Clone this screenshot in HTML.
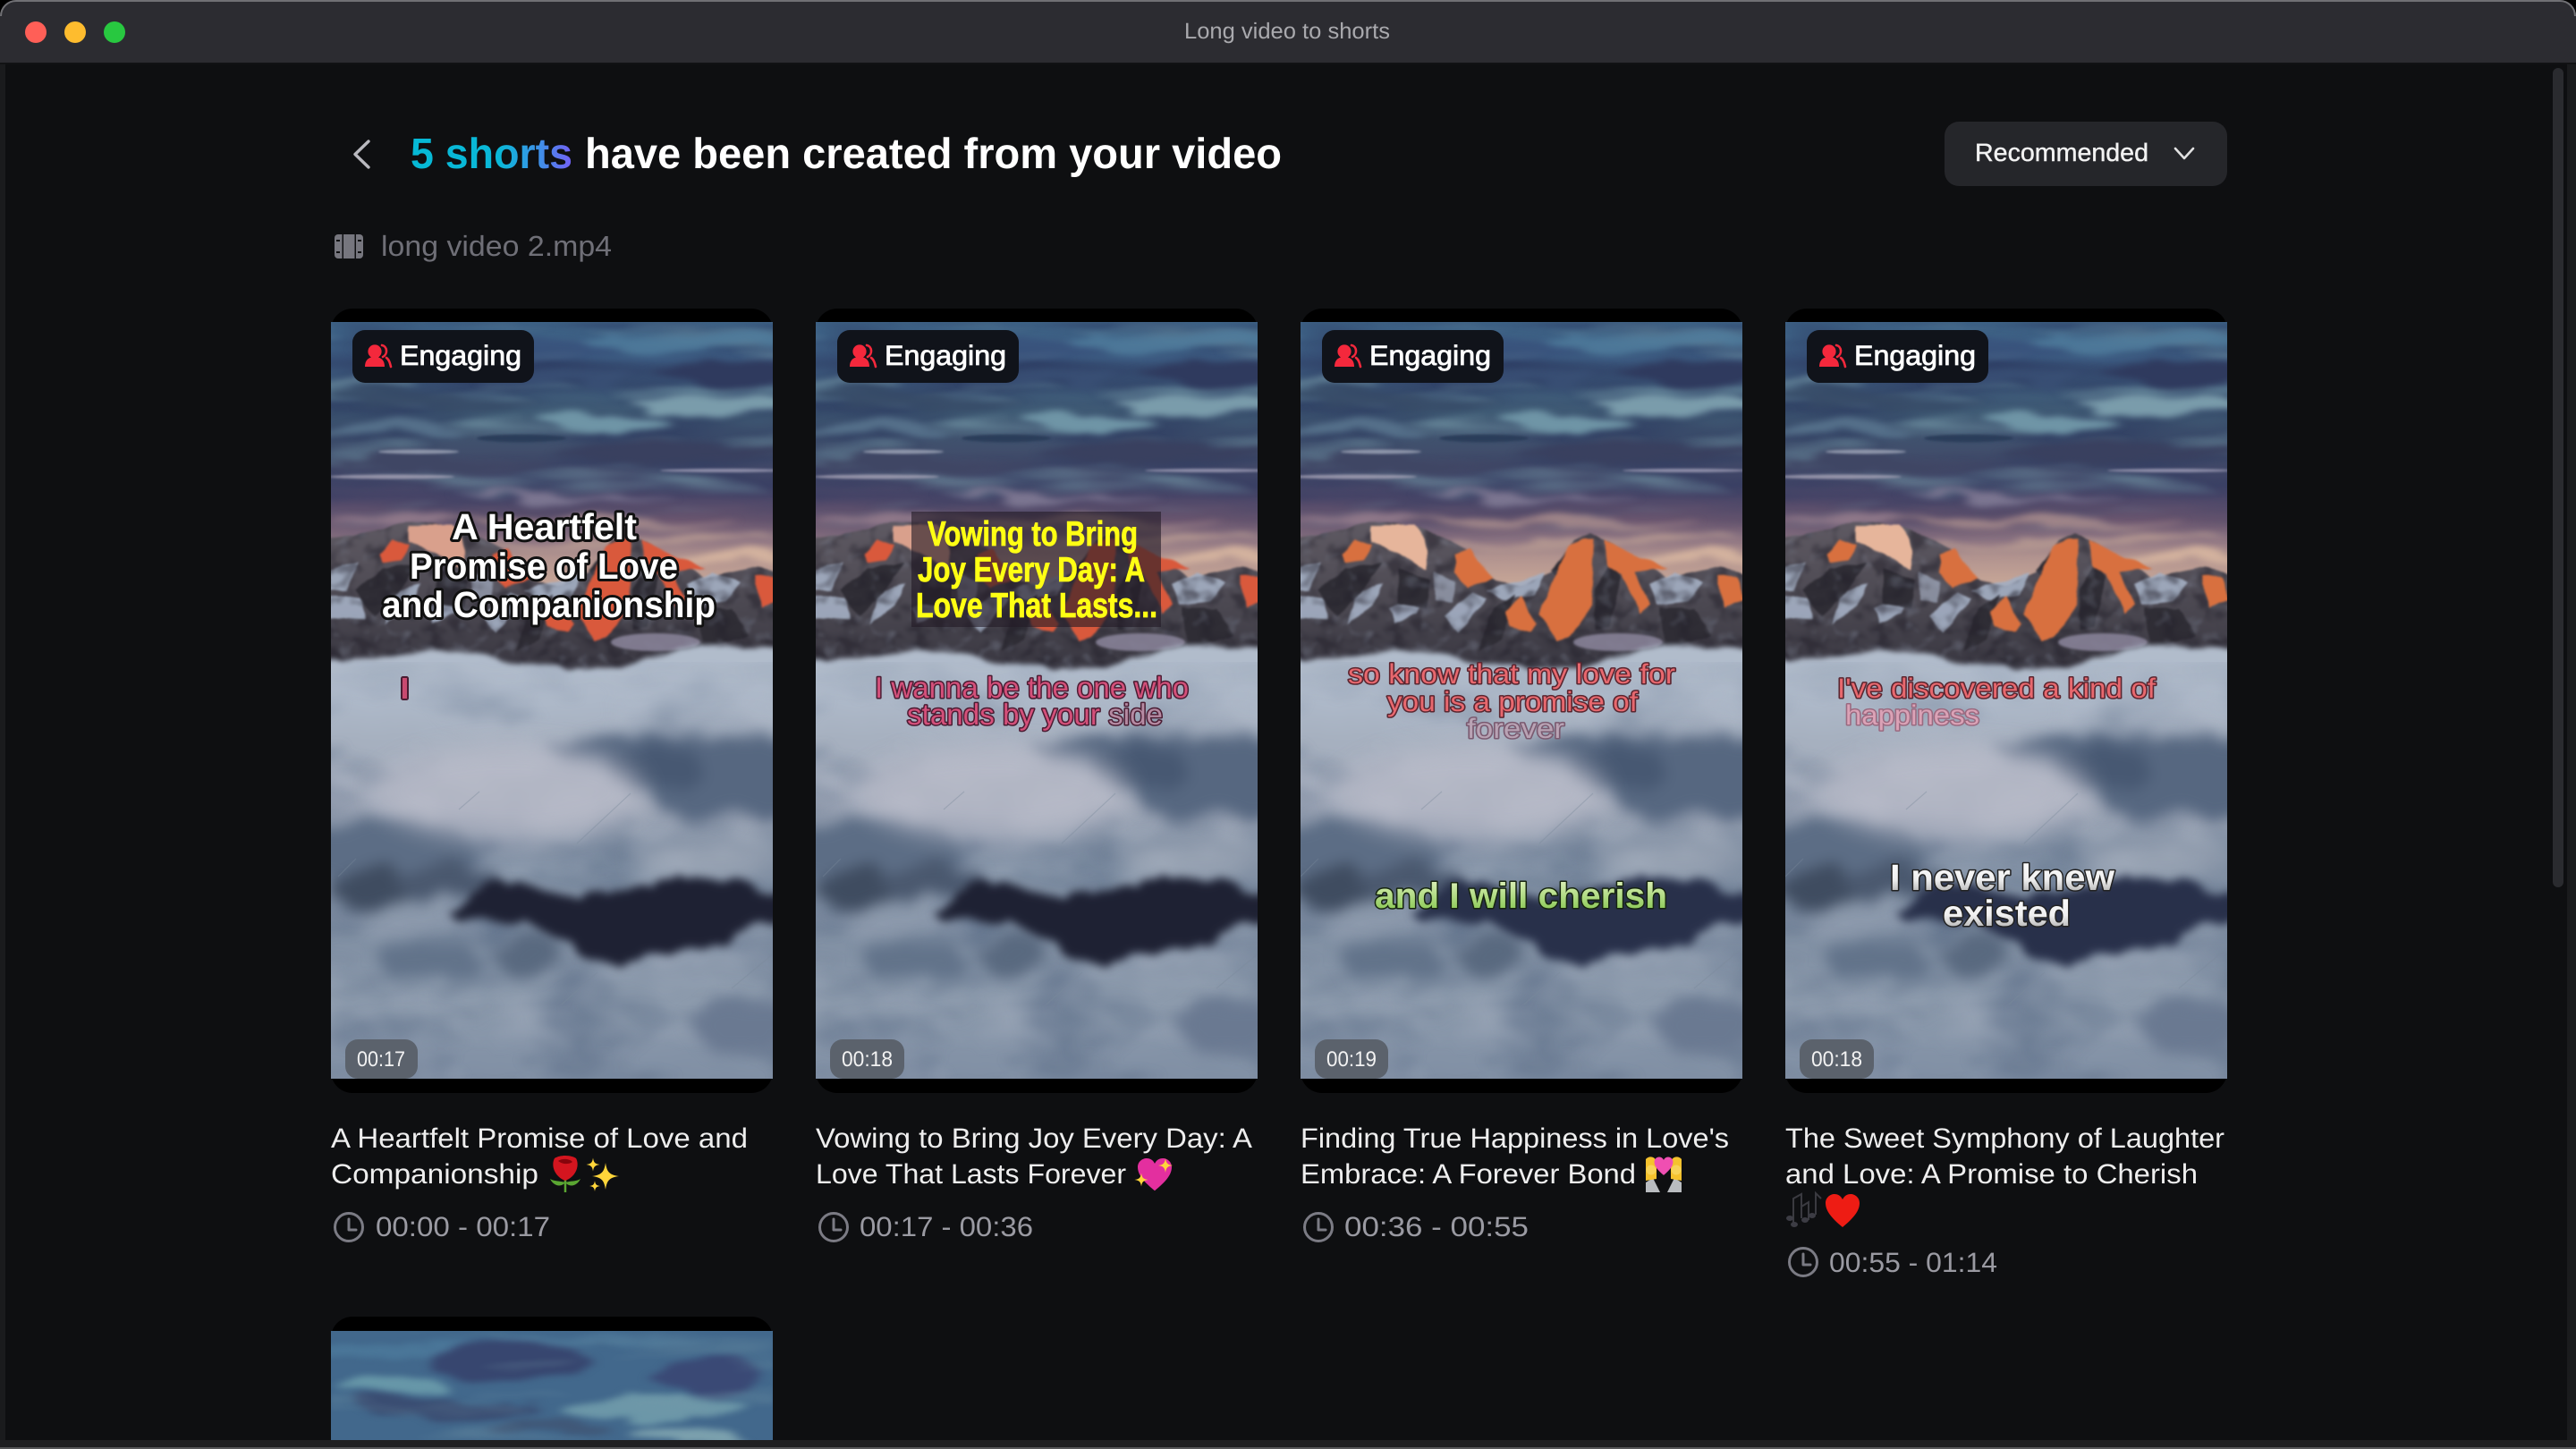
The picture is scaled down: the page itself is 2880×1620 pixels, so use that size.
<!DOCTYPE html>
<html lang="en"><head><meta charset="utf-8"><title>Long video to shorts</title>
<style>
html,body{margin:0;padding:0;background:#000;width:2880px;height:1620px;overflow:hidden}
svg{display:block}
text{font-family:"Liberation Sans","DejaVu Sans",sans-serif;text-rendering:geometricPrecision}
.t{font-size:31px;fill:#eeeeee}
.tm{font-size:31px;fill:#9a9aa2}
.eng{font-size:31px;fill:#fff;stroke:#fff;stroke-width:.8px;font-weight:400}
.dur{font-size:24px;fill:#f2f2f2}
.h1{font-size:41px;font-weight:700;fill:#fff;stroke:#111;stroke-width:6px;paint-order:stroke;stroke-linejoin:round}
.y{font-size:39px;font-weight:700;fill:#ffff14;stroke:#ffff14;stroke-width:.8px}
.p{font-size:33px;font-weight:400;fill:#d4507a;stroke:#4a1c32;stroke-width:3px;paint-order:stroke;stroke-linejoin:round}
.r{font-size:31px;font-weight:400;fill:#e8686e;stroke:#5a2630;stroke-width:3px;paint-order:stroke;stroke-linejoin:round}
.f{fill:#b9a3b4;stroke:#7a5a70}
.g{font-size:40px;font-weight:700;fill:url(#gr);stroke:#16240f;stroke-width:3px;paint-order:stroke;stroke-linejoin:round}
.w{font-size:41px;font-weight:700;fill:url(#wh);stroke:#222;stroke-width:3px;paint-order:stroke;stroke-linejoin:round}
</style></head>
<body>
<svg xmlns="http://www.w3.org/2000/svg" width="2880" height="1620" viewBox="0 0 2880 1620">
<defs>
<linearGradient id="sky" x1="0" y1="0" x2="0" y2="1">
<stop offset="0" stop-color="#3f6689"/><stop offset=".13" stop-color="#3c5a80"/><stop offset=".32" stop-color="#3f5a74"/><stop offset=".48" stop-color="#414b69"/><stop offset=".61" stop-color="#4a4668"/><stop offset=".69" stop-color="#6a566f"/><stop offset=".76" stop-color="#8d7482"/><stop offset=".82" stop-color="#b1938f"/><stop offset=".92" stop-color="#c8a797"/><stop offset="1" stop-color="#b59a96"/>
</linearGradient>
<linearGradient id="cl" gradientUnits="userSpaceOnUse" x1="0" y1="360" x2="0" y2="846">
<stop offset="0" stop-color="#b2bdcc"/><stop offset=".13" stop-color="#adb8c8"/><stop offset=".23" stop-color="#a6b0bf"/><stop offset=".37" stop-color="#a0a8b8"/><stop offset=".5" stop-color="#8796a9"/><stop offset=".66" stop-color="#7f8ea2"/><stop offset=".82" stop-color="#8d9bad"/><stop offset="1" stop-color="#808fa4"/>
</linearGradient>
<linearGradient id="mt" gradientUnits="userSpaceOnUse" x1="0" y1="220" x2="0" y2="390">
<stop offset="0" stop-color="#5f5a63"/><stop offset=".6" stop-color="#4a4750"/><stop offset="1" stop-color="#383640"/>
</linearGradient>
<linearGradient id="gt" gradientUnits="userSpaceOnUse" x1="459" y1="0" x2="640" y2="0">
<stop offset="0" stop-color="#06b9d6"/><stop offset=".55" stop-color="#0ab8d8"/><stop offset=".8" stop-color="#3f8fe8"/><stop offset="1" stop-color="#7460f5"/>
</linearGradient>
<linearGradient id="gr" x1="0" y1="0" x2="0" y2="1"><stop offset="0" stop-color="#e6f5c4"/><stop offset="1" stop-color="#7cc244"/></linearGradient>
<linearGradient id="wh" x1="0" y1="0" x2="0" y2="1"><stop offset="0" stop-color="#fff"/><stop offset=".55" stop-color="#f0f0f0"/><stop offset="1" stop-color="#9c9c9c"/></linearGradient>
<linearGradient id="fadeS" gradientUnits="userSpaceOnUse" x1="0" y1="0" x2="0" y2="250"><stop offset="0" stop-color="#fff"/><stop offset=".7" stop-color="#fff"/><stop offset="1" stop-color="#000"/></linearGradient>
<mask id="mS" maskUnits="userSpaceOnUse" x="-30" y="0" width="554" height="260"><rect x="-30" y="0" width="554" height="260" fill="url(#fadeS)"/></mask>
<linearGradient id="fadeC" gradientUnits="userSpaceOnUse" x1="0" y1="390" x2="0" y2="500"><stop offset="0" stop-color="#444"/><stop offset="1" stop-color="#fff"/></linearGradient>
<mask id="mC" maskUnits="userSpaceOnUse" x="-30" y="380" width="554" height="480"><rect x="-30" y="380" width="554" height="480" fill="url(#fadeC)"/></mask>

<filter id="org" filterUnits="userSpaceOnUse" x="-60" y="-40" width="614" height="926" color-interpolation-filters="sRGB">
<feTurbulence type="fractalNoise" baseFrequency=".01 .03" numOctaves="3" seed="4" result="n"/>
<feDisplacementMap in="SourceGraphic" in2="n" scale="34" xChannelSelector="R" yChannelSelector="G"/>
<feGaussianBlur stdDeviation="6 3.5"/>
</filter>
<filter id="org2" filterUnits="userSpaceOnUse" x="-60" y="300" width="614" height="600" color-interpolation-filters="sRGB">
<feTurbulence type="fractalNoise" baseFrequency=".028" numOctaves="3" seed="9" result="n"/>
<feDisplacementMap in="SourceGraphic" in2="n" scale="30" xChannelSelector="R" yChannelSelector="G"/>
<feGaussianBlur stdDeviation="8"/>
</filter>
<filter id="core" filterUnits="userSpaceOnUse" x="-60" y="540" width="614" height="260" color-interpolation-filters="sRGB">
<feTurbulence type="fractalNoise" baseFrequency=".03" numOctaves="3" seed="5" result="n"/>
<feDisplacementMap in="SourceGraphic" in2="n" scale="22" xChannelSelector="R" yChannelSelector="G"/>
<feGaussianBlur stdDeviation="5"/>
</filter>
<filter id="crag" filterUnits="userSpaceOnUse" x="-60" y="180" width="614" height="260" color-interpolation-filters="sRGB">
<feTurbulence type="fractalNoise" baseFrequency=".04" numOctaves="2" seed="12" result="n"/>
<feDisplacementMap in="SourceGraphic" in2="n" scale="7" xChannelSelector="R" yChannelSelector="G"/>
<feGaussianBlur stdDeviation="1"/>
</filter>
<filter id="cedge" filterUnits="userSpaceOnUse" x="-60" y="330" width="614" height="560" color-interpolation-filters="sRGB">
<feTurbulence type="fractalNoise" baseFrequency=".02" numOctaves="3" seed="7" result="n"/>
<feDisplacementMap in="SourceGraphic" in2="n" scale="18" xChannelSelector="R" yChannelSelector="G"/>
<feGaussianBlur stdDeviation="3"/>
</filter>
<filter id="wd" x="0" y="0" width="100%" height="100%" color-interpolation-filters="sRGB">
<feTurbulence type="fractalNoise" baseFrequency=".004 .026" numOctaves="3" seed="3"/>
<feColorMatrix values="0 0 0 0 .17  0 0 0 0 .22  0 0 0 0 .37  2.6 0 0 0 -.95"/>
<feGaussianBlur stdDeviation="2"/>
</filter>
<filter id="wl" x="0" y="0" width="100%" height="100%" color-interpolation-filters="sRGB">
<feTurbulence type="fractalNoise" baseFrequency=".005 .03" numOctaves="3" seed="21"/>
<feColorMatrix values="0 0 0 0 .46  0 0 0 0 .6  0 0 0 0 .66  0 3 0 0 -1.55"/>
<feGaussianBlur stdDeviation="2"/>
</filter>
<filter id="md" x="0" y="0" width="100%" height="100%" color-interpolation-filters="sRGB">
<feTurbulence type="fractalNoise" baseFrequency=".05 .06" numOctaves="2" seed="8"/>
<feColorMatrix values="0 0 0 0 .14  0 0 0 0 .13  0 0 0 0 .17  4 0 0 0 -1.9"/>
<feGaussianBlur stdDeviation="1"/>
</filter>
<filter id="ml" x="0" y="0" width="100%" height="100%" color-interpolation-filters="sRGB">
<feTurbulence type="fractalNoise" baseFrequency=".06 .07" numOctaves="2" seed="31"/>
<feColorMatrix values="0 0 0 0 .62  0 0 0 0 .66  0 0 0 0 .74  0 3.5 0 0 -1.95"/>
<feGaussianBlur stdDeviation="1"/>
</filter>
<filter id="cd" x="0" y="0" width="100%" height="100%" color-interpolation-filters="sRGB">
<feTurbulence type="fractalNoise" baseFrequency=".009 .016" numOctaves="3" seed="14"/>
<feColorMatrix values="0 0 0 0 .36  0 0 0 0 .43  0 0 0 0 .53  2.6 0 0 0 -1.15"/>
<feGaussianBlur stdDeviation="4"/>
</filter>
<filter id="cw" x="0" y="0" width="100%" height="100%" color-interpolation-filters="sRGB">
<feTurbulence type="fractalNoise" baseFrequency=".01 .016" numOctaves="3" seed="40"/>
<feColorMatrix values="0 0 0 0 .7  0 0 0 0 .73  0 0 0 0 .79  0 2.4 0 0 -1.15"/>
<feGaussianBlur stdDeviation="4"/>
</filter>
<filter id="b1" x="-10%" y="-10%" width="120%" height="120%"><feGaussianBlur stdDeviation="1.2"/></filter>
<filter id="b10" filterUnits="userSpaceOnUse" x="-40" y="340" width="574" height="540"><feGaussianBlur stdDeviation="14"/></filter>
<clipPath id="mc"><path d="M-20 243 L30 235 L75 224 L85 222 L125 228 L155 240 L185 253 L205 280 L215 290 L245 295 L280 280 L305 245 L325 237 L345 245 L385 270 L410 285 L450 277 L470 273 L514 290 L514 400 L-20 400Z"/></clipPath>

<g id="scene">
<rect x="-30" width="554" height="320" fill="url(#sky)"/>
<g mask="url(#mS)" opacity=".75">
<rect x="-20" y="0" width="534" height="250" filter="url(#wd)"/>
<rect x="-20" y="0" width="534" height="250" filter="url(#wl)"/>
</g>
<g filter="url(#org)">
<ellipse cx="400" cy="22" rx="130" ry="8" fill="#4f7c9c" opacity=".8"/>
<ellipse cx="170" cy="32" rx="150" ry="11" fill="#37507a" opacity=".7"/>
<ellipse cx="440" cy="58" rx="78" ry="11" fill="#2f3a5e"/>
<ellipse cx="250" cy="62" rx="90" ry="7" fill="#3a5075" opacity=".8"/>
<ellipse cx="30" cy="70" rx="55" ry="5" fill="#6a8a9c"/>
<ellipse cx="110" cy="87" rx="120" ry="10" fill="#364a66" opacity=".85"/>
<ellipse cx="420" cy="92" rx="95" ry="11" fill="#7a9cab"/>
<ellipse cx="300" cy="115" rx="75" ry="11" fill="#6f95a6"/>
<ellipse cx="60" cy="118" rx="82" ry="6" fill="#55708a"/>
<ellipse cx="380" cy="147" rx="130" ry="12" fill="#39405f"/>
<ellipse cx="120" cy="160" rx="120" ry="6" fill="#3f4664"/>
<ellipse cx="250" cy="196" rx="120" ry="3" fill="#7b7590"/>
<ellipse cx="60" cy="222" rx="70" ry="4" fill="#8f7889"/>
<ellipse cx="280" cy="226" rx="170" ry="4" fill="#9e8488"/>
<ellipse cx="330" cy="246" rx="160" ry="5" fill="#b0948f"/>
<ellipse cx="440" cy="268" rx="70" ry="6" fill="#d3b29e"/>
</g>
<g filter="url(#b1)">
<ellipse cx="205" cy="130" rx="50" ry="4.500" fill="#2b3c5a"/>
<ellipse cx="90" cy="145" rx="45" ry="2.500" fill="#a0a8ba" opacity=".8"/>
<ellipse cx="60" cy="173" rx="70" ry="2.500" fill="#a5a3b5" opacity=".8"/>
<ellipse cx="430" cy="166" rx="70" ry="2" fill="#8d8da8"/>
</g>
<g filter="url(#crag)">
<path fill="url(#mt)" d="M-20 243 L30 235 L75 224 L85 222 L125 228 L155 240 L185 253 L205 280 L215 290 L245 295 L280 280 L305 245 L325 237 L345 245 L385 270 L410 285 L450 277 L470 273 L514 290 L514 400 L-20 400Z"/>
<g fill="#a3aec2" opacity=".92">
<path d="M53 340L63 303L90 293L80 317Z"/><path d="M-10 307L27 307L30 333L-10 330Z"/><path d="M160 330L193 303L207 310L177 347Z"/><path d="M390 293L417 280L450 290L433 313L397 317Z"/><path d="M207 300L273 280L263 307L227 310Z"/><path d="M-10 277L23 267L10 300L-10 300Z"/><path d="M100 320L135 303L130 325L105 335Z"/><path d="M150 280L175 290L170 315L150 310Z" fill="#8d93a4"/>
</g>
<g fill="#2f2d35">
<path d="M280 278L303 248L300 275L290 290Z"/><path d="M345 270L360 285L345 340L330 345L328 300Z"/><path d="M20 300L50 275L90 270L70 300L40 330Z"/><path d="M110 275L145 290L140 320L110 315Z"/><path d="M215 320L240 305L225 355L200 370Z"/><path d="M400 320L440 320L460 350L410 365Z"/>
</g>
<g clip-path="url(#mc)">
<rect x="-20" y="220" width="534" height="180" filter="url(#md)" opacity=".5"/>
<rect x="-20" y="220" width="534" height="180" filter="url(#ml)" opacity=".25"/>
</g>
<g style="fill:var(--o)">
<path d="M300 250L317 243L328 243L325 317L300 353L287 357L267 327L287 277Z"/><path d="M340 243L367 257L410 275L373 280L390 317L380 327L360 283L343 273Z"/><path d="M230 323L248 307L263 337L257 347L233 340Z"/><path d="M173 260L190 253L213 287L187 297L173 280Z"/><path d="M47 260L63 243L80 250L70 267L50 270Z"/><path d="M467 283L490 287L494 310L473 320Z"/>
</g>
<path d="M80 227L127 227L140 243L140 277L113 260L80 247Z" style="fill:var(--k)"/>
</g>
<ellipse cx="355" cy="358" rx="50" ry="10" fill="#8f89a0" opacity=".8" filter="url(#b1)"/>
<path fill="url(#cl)" filter="url(#cedge)" d="M-40 382 C40 376 90 366 130 368 C170 370 190 384 230 386 C270 392 300 386 320 380 C350 372 380 360 420 364 C450 366 470 362 534 364 L534 890 L-40 890Z"/>
<g mask="url(#mC)">
<rect x="-20" y="380" width="534" height="470" filter="url(#cd)" opacity=".7"/>
<rect x="-20" y="380" width="534" height="470" filter="url(#cw)" opacity=".35"/>
</g>
<g filter="url(#org2)">
<path d="M230 470 L260 495 L293 495 L333 527 L390 557 L514 550 L514 465 L350 460Z" fill="#566780"/>
<ellipse cx="350" cy="500" rx="58" ry="26" fill="#475872"/>
<ellipse cx="50" cy="590" rx="110" ry="34" fill="#5c6d85"/>
<ellipse cx="40" cy="632" rx="48" ry="22" fill="#3f4c60"/>
<ellipse cx="120" cy="625" rx="60" ry="18" fill="#4a586e"/>
<ellipse cx="100" cy="715" rx="62" ry="22" fill="#62738a"/>
<ellipse cx="210" cy="708" rx="36" ry="26" fill="#59697f"/>
<ellipse cx="450" cy="790" rx="58" ry="30" fill="#6a7991"/>
</g>
<ellipse cx="190" cy="525" rx="150" ry="52" fill="#b9bcc9" opacity=".85" filter="url(#b10)"/>
<ellipse cx="420" cy="600" rx="90" ry="18" fill="#a8b0be" opacity=".8" filter="url(#b10)"/>
<path filter="url(#core)" style="fill:var(--d)" d="M147 640L173 623L233 637L287 640L353 627L400 617L467 633L530 647L530 673L467 670L433 697L400 700L363 707L320 717L267 703L233 683L187 667L123 667Z"/>
<g stroke="#7b8a9c" stroke-width="1.200" opacity=".4" fill="none">
<path d="M267 583L327 527"/><path d="M250 763L290 727"/><path d="M135 545L158 525"/><path d="M440 745L494 700"/><path d="M0 620L20 600"/>
</g>
</g>

<g id="badge">
<rect x="24" y="9" width="203" height="59" rx="14" fill="#10131a"/>
<circle cx="49" cy="33" r="7.6" fill="#f4283c"/>
<path d="M38 50C38 41 44 39 49 39C54 39 60 41 60 50Z" fill="#f4283c"/>
<path d="M57 26C63 27 64 36 58 39M62 40C65 42 66 46 67 50" fill="none" stroke="#f4283c" stroke-width="2.6" stroke-linecap="round"/>
</g>
<path id="heart" d="M20 38C8 28 1 20 1 11C1 5 6 1 11 1C15 1 18 3 20 7C22 3 25 1 29 1C34 1 39 5 39 11C39 20 32 28 20 38Z"/>
<path id="star" d="M0 -10C1 -3 3 -1 10 0C3 1 1 3 0 10C-1 3 -3 1 -10 0C-3 -1 -1 -3 0 -10Z"/>
<g id="clock" fill="none" stroke="#7b7b84" stroke-width="3"><circle cx="0" cy="0" r="15.5"/><path d="M0 -9V3H8" stroke-linecap="round" stroke-linejoin="round"/></g>
</defs>

<!-- window -->
<rect x="0" y="0" width="2880" height="1620" rx="18" fill="#0e0f11"/>
<rect x="0" y="70" width="6" height="1550" fill="#1a1b1d"/>
<rect x="2870" y="72" width="10" height="1548" fill="#1a1b1d"/>
<path d="M0 70V18A18 18 0 0 1 18 0H2862A18 18 0 0 1 2880 18V70Z" fill="#2c2c31"/>
<path d="M1 18A17 17 0 0 1 18 1H2862A17 17 0 0 1 2879 18" fill="none" stroke="#707074" stroke-width="2"/>
<rect x="0" y="70" width="2880" height="2" fill="#111214"/>
<circle cx="40" cy="36" r="12" fill="#ff5f57"/><circle cx="84" cy="36" r="12" fill="#febc2e"/><circle cx="128" cy="36" r="12" fill="#28c840"/>
<text x="1324" y="43" font-size="25" fill="#a9a9ad" textLength="230" lengthAdjust="spacingAndGlyphs">Long video to shorts</text>
<rect x="2854" y="76" width="12" height="916" rx="6" fill="#2a2b2f"/>

<!-- header -->
<path d="M412 158L397 172.500L412 187" fill="none" stroke="#b9b9bf" stroke-width="3.4" stroke-linecap="round" stroke-linejoin="round"/>
<text x="459" y="188" font-size="48" font-weight="700" fill="url(#gt)" textLength="181" lengthAdjust="spacingAndGlyphs">5 shorts</text>
<text x="654" y="188" font-size="48" font-weight="700" fill="#fff" textLength="779" lengthAdjust="spacingAndGlyphs">have been created from your video</text>
<rect x="2174" y="136" width="316" height="72" rx="16" fill="#25262a"/>
<text x="2208" y="180" font-size="28" fill="#f2f2f2" stroke="#f2f2f2" stroke-width=".4" textLength="194" lengthAdjust="spacingAndGlyphs">Recommended</text>
<path d="M2432 166L2442 177L2452 166" fill="none" stroke="#e2e2e2" stroke-width="2.6" stroke-linecap="round" stroke-linejoin="round"/>
<rect x="374" y="262" width="32" height="27" rx="4" fill="#76767e"/>
<g fill="#0e0f11"><rect x="382.500" y="262" width="1.500" height="27"/><rect x="396.500" y="262" width="1.500" height="27"/><rect x="376" y="268" width="4" height="2"/><rect x="376" y="281" width="4" height="2"/><rect x="400" y="268" width="4" height="2"/><rect x="400" y="281" width="4" height="2"/></g>
<text x="426" y="286" font-size="32" fill="#6f6f77" textLength="258" lengthAdjust="spacingAndGlyphs">long video 2.mp4</text>

<!-- card 1 -->
<rect x="370" y="345" width="494" height="877" rx="24" fill="#000"/>
<svg x="370" y="360" width="494" height="846" viewBox="0 0 494 846" style="--o:#d9593c;--k:#d9a08c;--d:#1e2133"><use href="#scene" transform="translate(8 0)"/></svg>
<use href="#badge" x="370" y="360"/>
<text class="eng" x="447" y="408" textLength="136" lengthAdjust="spacingAndGlyphs">Engaging</text>
<text class="h1" x="505" y="603" textLength="207" lengthAdjust="spacingAndGlyphs">A Heartfelt</text>
<text class="h1" x="458" y="647" textLength="300" lengthAdjust="spacingAndGlyphs">Promise of Love</text>
<text class="h1" x="427" y="690" textLength="373" lengthAdjust="spacingAndGlyphs">and Companionship</text>
<rect x="449" y="757" width="7" height="25" rx="1.500" fill="#c94a70" stroke="#4a1c32" stroke-width="2"/>
<rect x="386" y="1162" width="81" height="44" rx="14" fill="#5b626c"/>
<text class="dur" x="399" y="1192" textLength="54" lengthAdjust="spacingAndGlyphs">00:17</text>
<text class="t" x="370" y="1283" textLength="466" lengthAdjust="spacingAndGlyphs">A Heartfelt Promise of Love and</text>
<text class="t" x="370" y="1323" textLength="232" lengthAdjust="spacingAndGlyphs">Companionship</text>
<!-- rose -->
<path d="M632 1333V1312" stroke="#5aa632" stroke-width="2.500"/>
<path d="M632 1322C625 1320 620 1321 615 1318C619 1326 627 1328 632 1322ZM632 1322C639 1320 644 1321 649 1318C645 1326 637 1328 632 1322Z" fill="#5aa632"/>
<path d="M632 1320C619 1315 616 1302 620 1295C626 1291 638 1291 644 1295C648 1302 645 1315 632 1320Z" fill="#d4151f"/>
<path d="M624 1298C628 1295 636 1295 640 1299C636 1302 629 1302 624 1298Z" fill="#86040c"/>
<g fill="#ffd53a"><use href="#star" transform="translate(677 1315) scale(1.5)"/><use href="#star" transform="translate(663 1302) scale(.75)"/><use href="#star" transform="translate(665 1326) scale(.6)"/></g>
<use href="#clock" x="390" y="1372"/>
<text class="tm" x="420" y="1382" textLength="195" lengthAdjust="spacingAndGlyphs">00:00 - 00:17</text>

<!-- card 2 -->
<rect x="912" y="345" width="494" height="877" rx="24" fill="#000"/>
<svg x="912" y="360" width="494" height="846" viewBox="0 0 494 846" style="--o:#d9593c;--k:#d9a08c;--d:#1e2133"><use href="#scene" transform="translate(8 0)"/></svg>
<use href="#badge" x="912" y="360"/>
<text class="eng" x="989" y="408" textLength="136" lengthAdjust="spacingAndGlyphs">Engaging</text>
<rect x="1019" y="572" width="279" height="129" fill="#241c26" opacity=".62"/>
<text class="y" x="1037" y="610" textLength="235" lengthAdjust="spacingAndGlyphs">Vowing to Bring</text>
<text class="y" x="1026" y="650" textLength="254" lengthAdjust="spacingAndGlyphs">Joy Every Day: A</text>
<text class="y" x="1024" y="690" textLength="270" lengthAdjust="spacingAndGlyphs">Love That Lasts...</text>
<text class="p" x="978" y="780" textLength="351" lengthAdjust="spacingAndGlyphs">I wanna be the one who</text>
<text class="p" x="1014" y="810" textLength="286" lengthAdjust="spacingAndGlyphs">stands by your <tspan fill="#b58aa2">side</tspan></text>
<rect x="928" y="1162" width="83" height="44" rx="14" fill="#5b626c"/>
<text class="dur" x="941" y="1192" textLength="57" lengthAdjust="spacingAndGlyphs">00:18</text>
<text class="t" x="912" y="1283" textLength="488" lengthAdjust="spacingAndGlyphs">Vowing to Bring Joy Every Day: A</text>
<text class="t" x="912" y="1323" textLength="347" lengthAdjust="spacingAndGlyphs">Love That Lasts Forever</text>
<use href="#heart" x="0" y="0" transform="translate(1271 1294) scale(1 .98)" fill="#e32f9f"/>
<g fill="#ffd53a"><use href="#star" transform="translate(1303 1303) scale(.8)"/><use href="#star" transform="translate(1276 1319) scale(.75)"/></g>
<use href="#clock" x="932" y="1372"/>
<text class="tm" x="961" y="1382" textLength="194" lengthAdjust="spacingAndGlyphs">00:17 - 00:36</text>

<!-- card 3 -->
<rect x="1454" y="345" width="494" height="877" rx="24" fill="#000"/>
<svg x="1454" y="360" width="494" height="846" viewBox="0 0 494 846" style="--o:#d8703f;--k:#e6b59b;--d:#28304a"><use href="#scene"/></svg>
<use href="#badge" x="1454" y="360"/>
<text class="eng" x="1531" y="408" textLength="136" lengthAdjust="spacingAndGlyphs">Engaging</text>
<text class="r" x="1507" y="764" textLength="366" lengthAdjust="spacingAndGlyphs">so know that my love for</text>
<text class="r" x="1551" y="795" textLength="280" lengthAdjust="spacingAndGlyphs">you is a promise of</text>
<text class="r f" x="1640" y="825" textLength="109" lengthAdjust="spacingAndGlyphs">forever</text>
<text class="g" x="1537" y="1015" textLength="327" lengthAdjust="spacingAndGlyphs">and I will cherish</text>
<rect x="1470" y="1162" width="82" height="44" rx="14" fill="#5b626c"/>
<text class="dur" x="1483" y="1192" textLength="56" lengthAdjust="spacingAndGlyphs">00:19</text>
<text class="t" x="1454" y="1283" textLength="479" lengthAdjust="spacingAndGlyphs">Finding True Happiness in Love's</text>
<text class="t" x="1454" y="1323" textLength="375" lengthAdjust="spacingAndGlyphs">Embrace: A Forever Bond</text>
<!-- couple -->
<path d="M1840 1333V1322L1848 1317L1856 1333ZM1880 1333V1322L1872 1317L1864 1333Z" fill="#b9bcc0"/>
<path d="M1840 1296C1843 1292 1851 1292 1852 1300V1318L1840 1320Z" fill="#f5c22d"/><path d="M1880 1296C1877 1292 1869 1292 1868 1300V1318L1880 1320Z" fill="#f5c22d"/>
<circle cx="1846" cy="1308" r="5.500" fill="#f7d358"/><circle cx="1874" cy="1308" r="5.500" fill="#f7d358"/>
<use href="#heart" transform="translate(1849 1293) scale(.55)" fill="#f04fb2"/>
<use href="#clock" x="1474" y="1372"/>
<text class="tm" x="1503" y="1382" textLength="206" lengthAdjust="spacingAndGlyphs">00:36 - 00:55</text>

<!-- card 4 -->
<rect x="1996" y="345" width="494" height="877" rx="24" fill="#000"/>
<svg x="1996" y="360" width="494" height="846" viewBox="0 0 494 846" style="--o:#d8703f;--k:#e6b59b;--d:#28304a"><use href="#scene"/></svg>
<use href="#badge" x="1996" y="360"/>
<text class="eng" x="2073" y="408" textLength="136" lengthAdjust="spacingAndGlyphs">Engaging</text>
<text class="r" x="2054" y="780" textLength="356" lengthAdjust="spacingAndGlyphs">I've discovered a kind of</text>
<text class="r" x="2063" y="810" textLength="150" lengthAdjust="spacingAndGlyphs" style="fill:#dba2b6;stroke:#9a6a80">happiness</text>
<text class="w" x="2113" y="995" textLength="251" lengthAdjust="spacingAndGlyphs">I never knew</text>
<text class="w" x="2172" y="1035" textLength="143" lengthAdjust="spacingAndGlyphs">existed</text>
<rect x="2012" y="1162" width="83" height="44" rx="14" fill="#5b626c"/>
<text class="dur" x="2025" y="1192" textLength="57" lengthAdjust="spacingAndGlyphs">00:18</text>
<text class="t" x="1996" y="1283" textLength="491" lengthAdjust="spacingAndGlyphs">The Sweet Symphony of Laughter</text>
<text class="t" x="1996" y="1323" textLength="461" lengthAdjust="spacingAndGlyphs">and Love: A Promise to Cherish</text>
<!-- notes + heart -->
<g fill="none" stroke="#3a3a40" stroke-width="2"><path d="M2005 1368V1340L2014 1335V1362M2014 1349L2022 1344V1364M2030 1358V1334L2036 1340"/></g>
<g fill="#3c3c44"><ellipse cx="2001" cy="1362" rx="4" ry="3"/><ellipse cx="2006" cy="1369" rx="4" ry="3"/><ellipse cx="2018" cy="1364" rx="4" ry="3"/><ellipse cx="2026" cy="1359" rx="4" ry="3"/></g>
<use href="#heart" transform="translate(2040 1334)" fill="#ee1c14"/>
<use href="#clock" x="2016" y="1411"/>
<text class="tm" x="2045" y="1422" textLength="188" lengthAdjust="spacingAndGlyphs">00:55 - 01:14</text>

<!-- card 5 -->
<rect x="370" y="1472" width="494" height="150" rx="24" fill="#000"/>
<svg x="370" y="1488" width="494" height="122" viewBox="0 0 494 122">
<rect width="494" height="122" fill="#42688c"/>
<g filter="url(#org)">
<ellipse cx="80" cy="22" rx="100" ry="8" fill="#4a7698"/>
<ellipse cx="200" cy="35" rx="90" ry="20" fill="#37466f"/>
<ellipse cx="420" cy="50" rx="55" ry="18" fill="#3a4975"/>
<ellipse cx="70" cy="62" rx="65" ry="8" fill="#6797a8"/>
<ellipse cx="130" cy="85" rx="110" ry="12" fill="#3a4d72"/>
<ellipse cx="360" cy="85" rx="100" ry="15" fill="#6c97a8"/>
<ellipse cx="240" cy="110" rx="70" ry="8" fill="#405878"/>
<ellipse cx="400" cy="115" rx="70" ry="10" fill="#7ba0ad"/>
<ellipse cx="300" cy="10" rx="120" ry="6" fill="#4c7596"/>
</g>
<rect x="0" y="0" width="494" height="122" filter="url(#wl)" opacity=".4"/>
</svg>

<!-- bottom edge -->
<rect x="0" y="1610" width="2880" height="8" fill="#1f1f21"/>
<rect x="0" y="1618" width="2880" height="2" fill="#565658"/>
</svg>
</body></html>
